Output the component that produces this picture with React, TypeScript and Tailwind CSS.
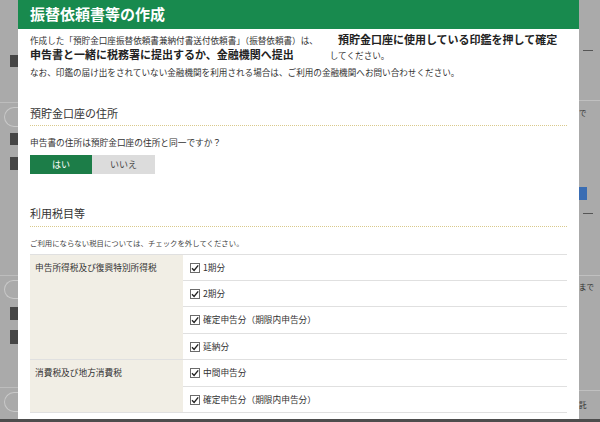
import React from 'react';

type Row = { label: string; h: string };
type Group = { title: string; rows: Row[] };

const groups: Group[] = [
  {
    title: '申告所得税及び復興特別所得税',
    rows: [
      { label: '1期分', h: 'h-[25px]' },
      { label: '2期分', h: 'h-[25px]' },
      { label: '確定申告分（期限内申告分）', h: 'h-[26px]' },
      { label: '延納分', h: 'h-[25px]' },
    ],
  },
  {
    title: '消費税及び地方消費税',
    rows: [
      { label: '中間申告分', h: 'h-[26px]' },
      { label: '確定申告分（期限内申告分）', h: 'h-[25px]' },
    ],
  },
];

const CheckBox = () => (
  <svg width="10" height="10" viewBox="0 0 10 10" className="shrink-0">
    <rect x="0.5" y="0.5" width="9" height="9" fill="#fff" stroke="#6b6b6b" />
    <path d="M2 5.2 L4.1 7.4 L8.2 2.4" fill="none" stroke="#222" strokeWidth="1.4" />
  </svg>
);

const LeftStrip = () => (
  <div className="w-[18px] shrink-0 flex flex-col">
    <div className="mt-[55px] ml-[10px] h-[12px] w-[8px] bg-[#464646]" />
    <div className="mt-[35px] h-px bg-[#bdbdbd]" />
    <div className="mt-[4px] ml-[4px] h-[20px] w-[14px] rounded-l-full border border-r-0 border-[#c9c9c9]" />
    <div className="mt-[6px] ml-[10px] h-[12px] w-[8px] bg-[#464646]" />
    <div className="mt-[12px] ml-[10px] h-[13px] w-[8px] bg-[#464646]" />
    <div className="mt-[105px] h-px bg-[#bdbdbd]" />
    <div className="mt-[4px] ml-[4px] h-[19px] w-[14px] rounded-l-full border border-r-0 border-[#c9c9c9]" />
    <div className="mt-[8px] ml-[10px] h-[13px] w-[8px] bg-[#464646]" />
    <div className="mt-[10px] ml-[10px] h-[14px] w-[8px] bg-[#464646]" />
    <div className="mt-[43px] h-px bg-[#bdbdbd]" />
    <div className="mt-[4px] ml-[4px] h-[20px] w-[14px] rounded-l-full border border-r-0 border-[#c9c9c9]" />
  </div>
);

const RightStrip = () => (
  <div className="w-[21px] shrink-0 flex flex-col text-[7.5px] leading-[12px] text-[#2a2a2a]">
    <div className="mt-[50px] ml-[4px] h-px w-[10px] bg-[#555]" />
    <div className="mt-[49px] h-px bg-[#c0c0c0]" />
    <div className="mt-[6px]">で</div>
    <div className="mt-[68px] h-[13px] w-[8px] bg-[#3a6db3]" />
    <div className="mt-[13px] ml-[4px] h-px w-[10px] bg-[#555]" />
    <div className="mt-[61px] h-px bg-[#c0c0c0]" />
    <div className="mt-[5px] whitespace-nowrap">まで</div>
    <div className="mt-[97px] h-px bg-[#c0c0c0]" />
    <div className="mt-[8px]">託</div>
  </div>
);

const Modal = () => (
  <div className="w-[561px] shrink-0 bg-white flex flex-col text-[#333]">
    <div className="h-[29px] bg-[#188a4e] px-[12px] flex items-center pb-[3px]">
      <h2 className="text-[15px] font-bold text-white leading-none">振替依頼書等の作成</h2>
    </div>

    <div className="px-[12px]">
      <p className="mt-[3px] text-[8.6px] leading-[14px] whitespace-nowrap">
        作成した「預貯金口座振替依頼書兼納付書送付依頼書」（振替依頼書）は、
        <span className="ml-[20px] text-[11px] font-bold text-[#222]">預貯金口座に使用している印鑑を押して確定</span>
        <br />
        <span className="text-[11px] font-bold text-[#222]">申告書と一緒に税務署に提出するか、金融機関へ提出</span>
        <span className="ml-[36px]">してください。</span>
      </p>
      <p className="mt-[3px] text-[8.6px] leading-[14px]">
        なお、印鑑の届け出をされていない金融機関を利用される場合は、ご利用の金融機関へお問い合わせください。
      </p>

      <h3 className="mt-[26px] pb-[4px] text-[11px] leading-[16px] border-b border-dotted border-[#d9c98c]">
        預貯金口座の住所
      </h3>
      <p className="mt-[10px] text-[8.7px] leading-[14px]">申告書の住所は預貯金口座の住所と同一ですか？</p>
      <div className="mt-[5px] flex">
        <button type="button" className="w-[62px] h-[19px] bg-[#1c7d48] text-white text-[9px]">
          はい
        </button>
        <button type="button" className="w-[63px] h-[19px] bg-[#dcdcdc] text-[#444] text-[9px]">
          いいえ
        </button>
      </div>

      <h3 className="mt-[31px] pb-[5px] text-[11px] leading-[16px] border-b border-dotted border-[#d9c98c]">
        利用税目等
      </h3>
      <p className="mt-[10px] text-[7.4px] leading-[12px] text-[#444]">
        ご利用にならない税目については、チェックを外してください。
      </p>

      <div className="mt-[5px] border-t border-[#e0e0e0]">
        {groups.map((g) => (
          <div key={g.title} className="flex border-b border-[#e0e0e0]">
            <div className="w-[153px] shrink-0 bg-[#f1eee5] px-[5px] text-[8.7px] leading-[25px]">{g.title}</div>
            <div className="flex-1">
              {g.rows.map((r, i) => (
                <div
                  key={r.label + i}
                  className={`${r.h} flex items-center gap-[3px] pl-[7px] text-[8.7px] ${
                    i > 0 ? 'box-content border-t border-[#e0e0e0]' : ''
                  }`}
                >
                  <CheckBox />
                  <span>{r.label}</span>
                </div>
              ))}
            </div>
          </div>
        ))}
      </div>
    </div>
  </div>
);

export default function App() {
  return (
    <div className="w-[600px] h-[422px] overflow-hidden bg-[#aaaaaa] flex flex-col font-['Noto_Sans_CJK_JP',sans-serif]">
      <div className="flex h-[419px] overflow-hidden">
        <LeftStrip />
        <Modal />
        <RightStrip />
      </div>
      <div className="h-[3px] bg-[#4d4d4d]" />
    </div>
  );
}
